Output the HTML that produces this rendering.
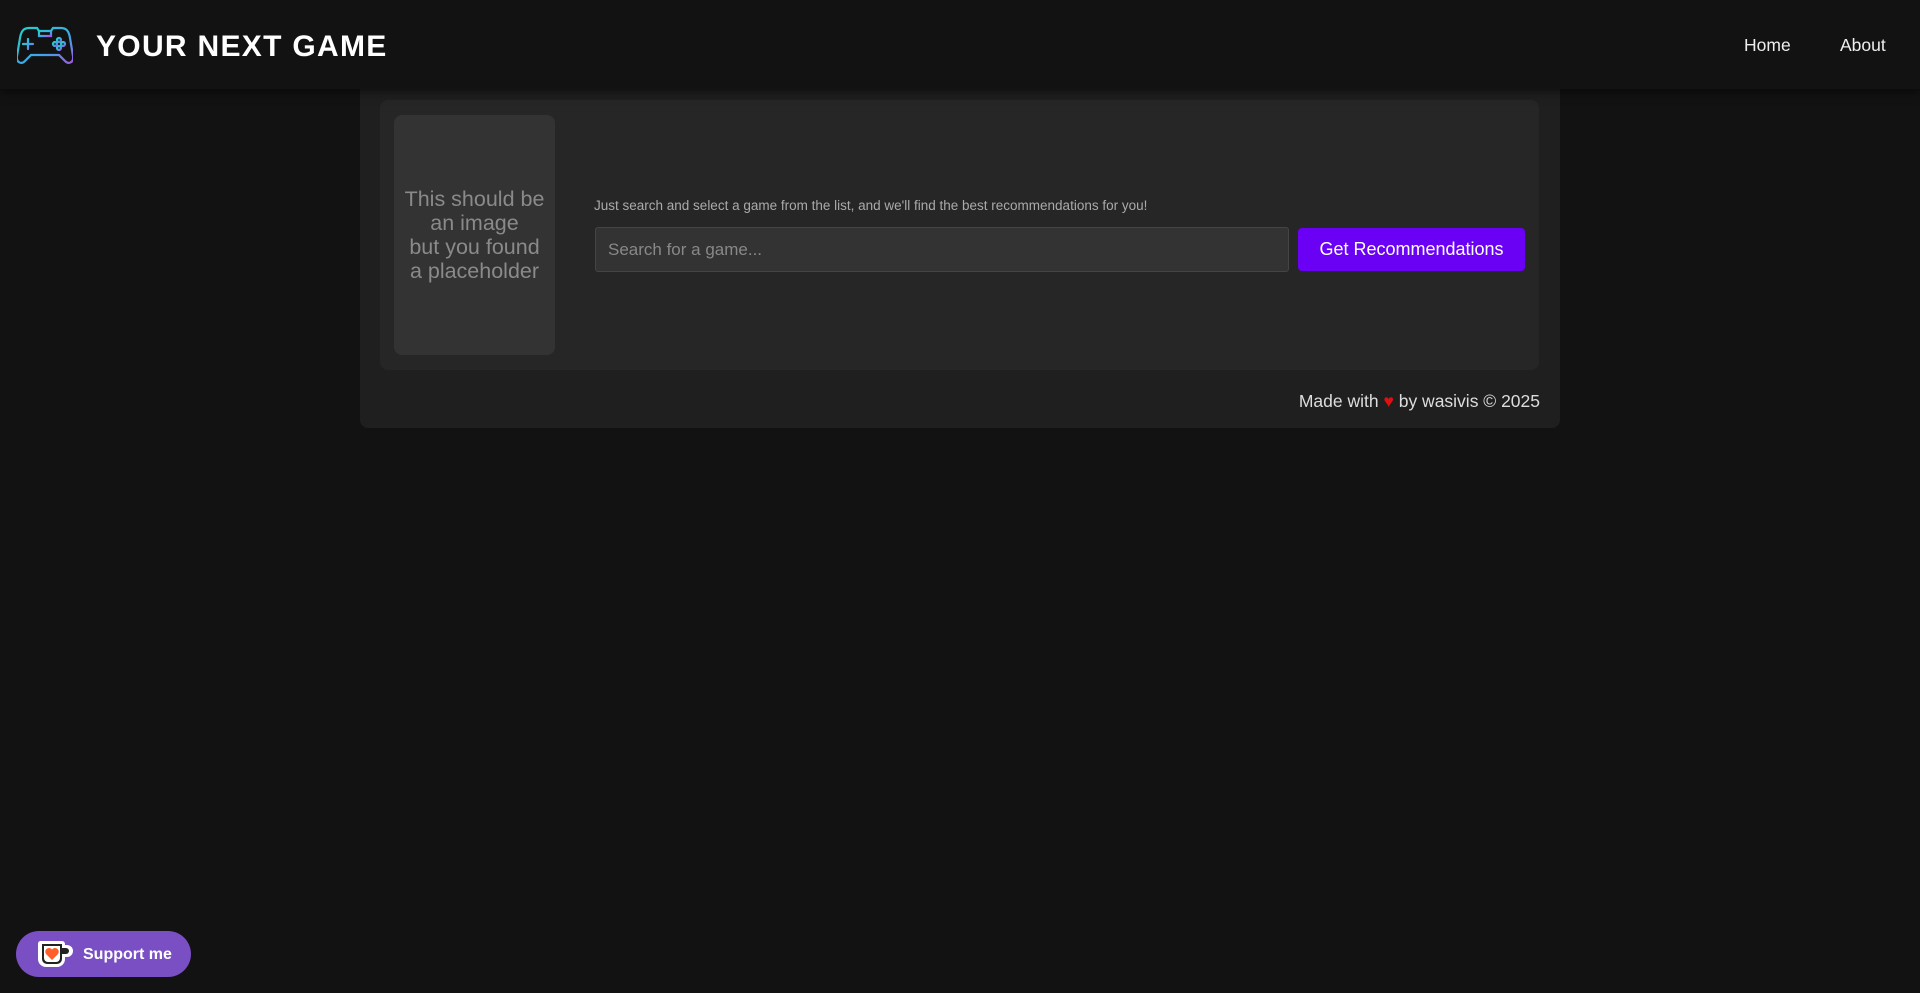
<!DOCTYPE html>
<html><head><meta charset="utf-8"><style>
*{box-sizing:border-box;margin:0;padding:0}
body{width:1920px;height:993px;background:#121212;font-family:"Liberation Sans",sans-serif;position:relative;overflow:hidden;color:#fff}
.hdr{position:absolute;left:0;top:0;width:1920px;height:89px;background:#121212;box-shadow:0 2px 10px rgba(0,0,0,.6);z-index:2}
.title{position:absolute;left:96px;top:30px;font-size:30px;font-weight:bold;letter-spacing:1.3px;color:#fff}
.nav{position:absolute;top:35px;font-size:17.5px;color:#eee}
.main{position:absolute;left:360px;top:86px;width:1200px;height:342px;background:#1f1f1f;border-radius:0 0 8px 8px}
.card{position:absolute;left:20px;top:14px;width:1159px;height:270px;background:#262626;border-radius:8px}
.ph{position:absolute;left:14px;top:15px;width:161px;height:240px;background:#333;border-radius:8px;color:#8a8a8a;font-size:21.5px;line-height:24px;text-align:center;display:flex;align-items:center;justify-content:center;white-space:nowrap}
.hint{position:absolute;left:214px;top:98px;font-size:13.5px;color:#aaa}
.inp{position:absolute;left:215px;top:127px;width:694px;height:45px;background:#333;border:1px solid #444;border-radius:3px;color:#888;font-size:17px;padding:12px 12px}
.btn{position:absolute;left:918px;top:128px;width:227px;height:43px;background:#6a00f4;border-radius:4px;color:#fff;font-size:18px;text-align:center;line-height:43px}
.foot{position:absolute;right:20px;top:305px;font-size:17.5px;color:#ddd}
.sup{position:absolute;left:16px;top:931px;width:175px;height:46px;border-radius:23px;background:#7b4fc4;color:#fff;font-weight:bold;font-size:16px}
</style></head><body>
<div class="hdr">
<svg style="position:absolute;left:17px;top:23px" width="56" height="44" viewBox="0 0 56 44"><defs><linearGradient id="g" x1="0" y1="0" x2="1" y2="1"><stop offset="0" stop-color="#22d3c5"/><stop offset=".6" stop-color="#3fa6e8"/><stop offset="1" stop-color="#a259e6"/></linearGradient></defs><g fill="none" stroke="url(#g)" stroke-width="2.2" stroke-linecap="round"><path d="M12 5h8l2 3h12l2-3h8c6 0 8 4 9 10l3 18c1 6-4 9-8 5l-6-6H14l-6 6c-4 4-9 1-8-5l3-18C4 9 6 5 12 5z"/><path d="M22 8v5h12V8"/><path d="M11 16v10M6 21h10"/><circle cx="42" cy="17" r="2"/><circle cx="42" cy="25" r="2"/><circle cx="38" cy="21" r="2"/><circle cx="46" cy="21" r="2"/></g></svg>
<div class="title">YOUR NEXT GAME</div>
<div class="nav" style="left:1744px">Home</div>
<div class="nav" style="left:1840px">About</div>
</div>
<div class="main">
<div class="card">
<div class="ph">This should be<br>an image<br>but you found<br>a placeholder</div>
<div class="hint">Just search and select a game from the list, and we'll find the best recommendations for you!</div>
<div class="inp">Search for a game...</div>
<div class="btn">Get Recommendations</div>
</div>
<div class="foot">Made with <span style="color:#e01010">♥</span> by wasivis © 2025</div>
</div>
<div class="sup">
<svg style="position:absolute;left:19px;top:7px" width="38" height="32" viewBox="0 0 38 32"><path d="M5 3h22a3 3 0 0 1 3 3v1h2a6 6 0 0 1 0 12h-2v2a8 8 0 0 1-8 8H11a8 8 0 0 1-8-8V6a3 3 0 0 1 2-3z" fill="#fff"/><path d="M7 6h20v15a5 5 0 0 1-5 5H12a5 5 0 0 1-5-5z" fill="#222"/><path d="M27 10h4a3 3 0 0 1 0 6h-4z" fill="#222"/><path d="M9 8h16v12a4 4 0 0 1-4 4h-8a4 4 0 0 1-4-4z" fill="#fff"/><path d="M17 22l-6-6a3.3 3.3 0 0 1 6-4.5 3.3 3.3 0 0 1 6 4.5z" fill="#ff5e2b"/></svg>
<span style="position:absolute;left:67px;top:15px">Support me</span>
</div>
</body></html>
